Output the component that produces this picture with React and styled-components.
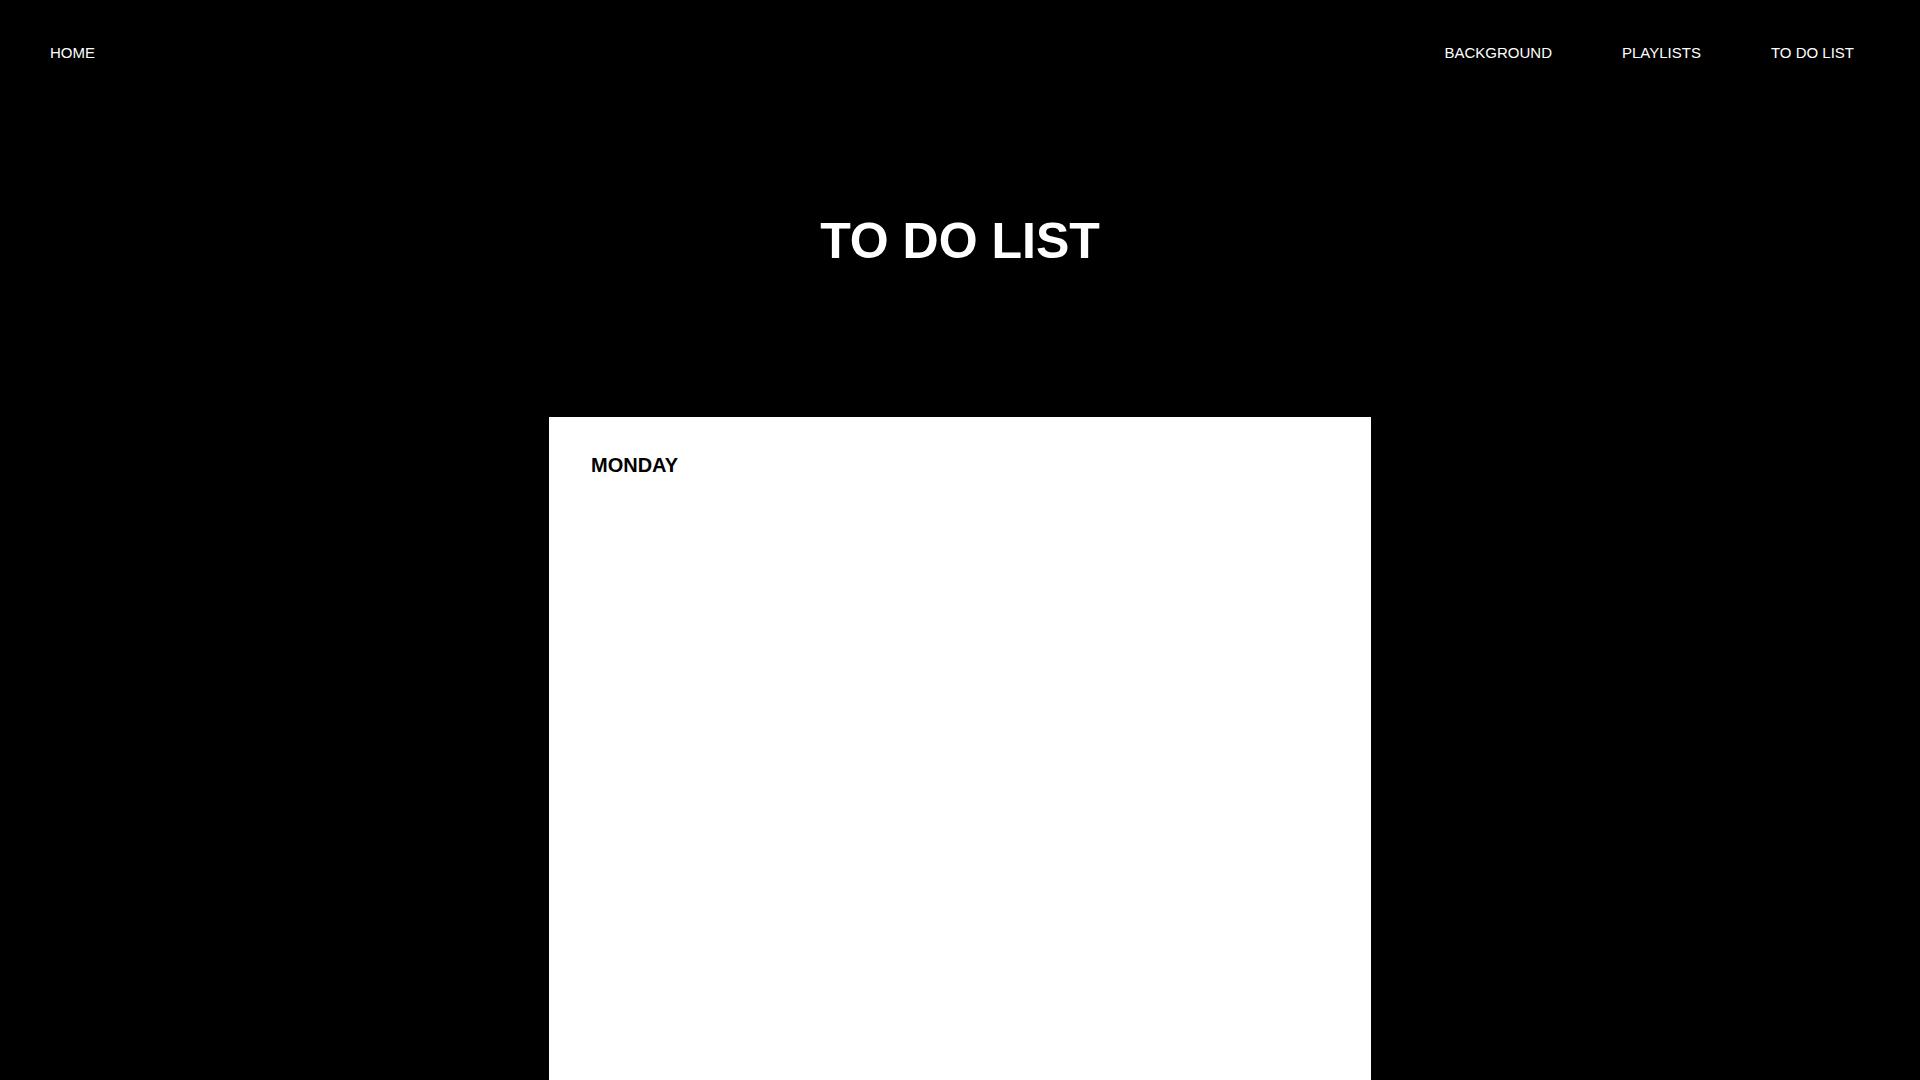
import React from "react";
import styled, { createGlobalStyle } from "styled-components";

const GlobalStyle = createGlobalStyle`
  html, body {
    margin: 0;
    padding: 0;
    background: #000;
  }
  body {
    font-family: "Liberation Sans", Arial, sans-serif;
    color: #fff;
  }
`;

const Page = styled.div`
  min-height: 100vh;
  background: #000;
  display: flex;
  flex-direction: column;
  align-items: center;
`;

const NavBar = styled.nav`
  align-self: stretch;
  display: flex;
  justify-content: space-between;
  align-items: center;
  padding: 44px 66px 0 50px;
`;

const NavGroup = styled.div`
  display: flex;
  gap: 70px;
`;

const NavLink = styled.a`
  font-size: 15px;
  line-height: 17px;
  color: #fff;
  text-decoration: none;
  text-transform: uppercase;
  cursor: pointer;
`;

const Title = styled.h1`
  margin: 152px 0 0;
  font-size: 50px;
  line-height: 57px;
  font-weight: 700;
  color: #fff;
`;

const Card = styled.section`
  margin-top: 147px;
  width: 822px;
  min-height: 800px;
  background: #fff;
  box-sizing: border-box;
  padding: 37px 42px;
`;

const DayTitle = styled.h2`
  margin: 0;
  font-size: 20px;
  line-height: 23px;
  font-weight: 700;
  color: #000;
`;

export default function App() {
  return (
    <>
      <GlobalStyle />
      <Page>
        <NavBar>
          <NavLink>Home</NavLink>
          <NavGroup>
            <NavLink>Background</NavLink>
            <NavLink>Playlists</NavLink>
            <NavLink>To do list</NavLink>
          </NavGroup>
        </NavBar>
        <Title>TO DO LIST</Title>
        <Card>
          <DayTitle>MONDAY</DayTitle>
        </Card>
      </Page>
    </>
  );
}
